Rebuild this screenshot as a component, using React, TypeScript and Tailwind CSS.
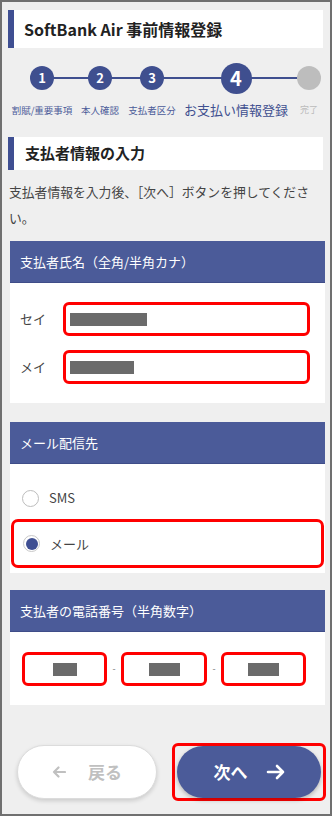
import React from 'react';

const font = { fontFamily: '"Noto Sans CJK JP", "Noto Sans", sans-serif' };

const steps = [
  { n: '1', label: '割賦/重要事項', w: 'w-[64px]' },
  { n: '2', label: '本人確認', w: 'w-[52px]' },
  { n: '3', label: '支払者区分', w: 'w-[52px]' },
  { n: '4', label: 'お支払い情報登録', w: 'w-[116px]', active: true },
  { n: '', label: '完了', w: 'w-[30px]', done: true },
];

const Redact: React.FC<{ w: string }> = ({ w }) => <div className={`h-[13px] bg-[#6b6b6b] ${w}`} />;

const CardHeader: React.FC<{ title: string }> = ({ title }) => (
  <div className="h-[42px] bg-[#4b5b99] border-b border-[#3f4d88] flex items-center pl-[10px] text-[13px] text-white">
    {title}
  </div>
);

export default function App() {
  return (
    <div
      className="w-[332px] h-[816px] border-2 border-[#707070] bg-[#efefef] overflow-hidden flex flex-col"
      style={font}
    >
      {/* Page title */}
      <div className="mt-[8px] ml-[6px] w-[315px] h-[38px] bg-white flex items-center">
        <div className="w-[6px] self-stretch bg-[#3f4f92]" />
        <div className="pl-[10px] text-[16px] font-bold text-[#222]">SoftBank Air 事前情報登録</div>
      </div>

      {/* Stepper */}
      <div className="relative mt-[14px] ml-[8px] flex">
        <div className="absolute left-[34px] top-[15px] w-[265px] h-[2px] bg-[#3f4f8f]" />
        {steps.map((s) => (
          <div key={s.label} className={`relative flex flex-col items-center ${s.w}`}>
            <div className="h-[32px] flex items-center">
              {s.active ? (
                <div className="w-[31px] h-[31px] rounded-full bg-[#3f4f8f] text-white text-[20px] font-bold flex items-center justify-center">
                  {s.n}
                </div>
              ) : s.done ? (
                <div className="w-[24px] h-[24px] rounded-full bg-[#bdbdbd]" />
              ) : (
                <div className="w-[24px] h-[24px] rounded-full bg-[#3f4f8f] text-white text-[13px] font-bold flex items-center justify-center">
                  {s.n}
                </div>
              )}
            </div>
            <div
              className={`mt-[8px] h-[16px] flex items-center whitespace-nowrap ${
                s.active ? 'text-[13px] text-[#3f4f8f]' : s.done ? 'text-[9px] text-[#bbbbbb]' : 'text-[9.5px] text-[#4b5b99]'
              }`}
            >
              {s.label}
            </div>
          </div>
        ))}
      </div>

      {/* Section title */}
      <div className="mt-[19px] ml-[6px] w-[315px] h-[33px] bg-white flex items-center">
        <div className="w-[6px] self-stretch bg-[#3f4f92]" />
        <div className="pl-[11px] text-[15px] font-bold text-[#222]">支払者情報の入力</div>
      </div>

      <p className="mt-[9px] ml-[7px] w-[316px] text-[12.8px] leading-[26px] text-[#444]">
        支払者情報を入力後、［次へ］ボタンを押してください。
      </p>

      {/* Name card */}
      <div className="mt-[10px] ml-[8px] w-[315px] bg-white">
        <CardHeader title="支払者氏名（全角/半角カナ）" />
        <div className="pt-[19px] pb-[19px] flex flex-col gap-[14px]">
          {[
            { l: 'セイ', w: 'w-[77px]' },
            { l: 'メイ', w: 'w-[64px]' },
          ].map((r) => (
            <div key={r.l} className="flex items-center">
              <div className="w-[53px] pl-[10px] text-[13px] text-[#444]">{r.l}</div>
              <div className="w-[247px] h-[34px] border-[3px] border-[#ff0000] rounded-[6px] flex items-center pl-[4px]">
                <Redact w={r.w} />
              </div>
            </div>
          ))}
        </div>
      </div>

      {/* Mail card */}
      <div className="mt-[19px] ml-[8px] w-[315px] bg-white">
        <CardHeader title="メール配信先" />
        <div className="pt-[22px] pb-[5px] flex flex-col">
          <div className="h-[24px] flex items-center pl-[12px] mb-[9px]">
            <div className="w-[17px] h-[17px] rounded-full border-[1.5px] border-[#bdbdbd] bg-white" />
            <span className="ml-[10px] text-[13px] text-[#444]">SMS</span>
          </div>
          <div className="ml-[1px] w-[313px] h-[49px] border-[3px] border-[#ff0000] rounded-[7px] flex items-center pl-[9px]">
            <div className="w-[17px] h-[17px] rounded-full border-[1.5px] border-[#c8c8c8] bg-white flex items-center justify-center">
              <div className="w-[12px] h-[12px] rounded-full bg-[#3f4f92]" />
            </div>
            <span className="ml-[10px] text-[13px] text-[#444]">メール</span>
          </div>
        </div>
      </div>

      {/* Phone card */}
      <div className="mt-[17px] ml-[8px] w-[315px] bg-white">
        <CardHeader title="支払者の電話番号（半角数字）" />
        <div className="pt-[20px] pb-[19px] pl-[12px] flex items-center">
          <div className="w-[85px] h-[34px] border-[3px] border-[#ff0000] rounded-[6px] flex items-center justify-center">
            <Redact w="w-[24px]" />
          </div>
          <div className="w-[14px] text-center text-[9px] text-[#777]">-</div>
          <div className="w-[86px] h-[34px] border-[3px] border-[#ff0000] rounded-[6px] flex items-center justify-center">
            <Redact w="w-[31px]" />
          </div>
          <div className="w-[14px] text-center text-[9px] text-[#777]">-</div>
          <div className="w-[85px] h-[34px] border-[3px] border-[#ff0000] rounded-[6px] flex items-center justify-center">
            <Redact w="w-[31px]" />
          </div>
        </div>
      </div>

      {/* Buttons */}
      <div className="mt-[38px] flex items-center">
        <button className="ml-[15px] w-[140px] h-[54px] rounded-full bg-white border border-[#dcdcdc] shadow-[0_2px_4px_rgba(0,0,0,0.15)] flex items-center justify-center gap-[22px] text-[#c0c0c0] text-[17px] font-bold">
          <svg width="14" height="14" viewBox="0 0 14 14" fill="none" stroke="#c0c0c0" strokeWidth="2.2" strokeLinecap="round" strokeLinejoin="round">
            <path d="M13 7H2M6.5 2.5 2 7l4.5 4.5" />
          </svg>
          <span>戻る</span>
        </button>
        <div className="ml-[15px] w-[154px] h-[58px] border-[3px] border-[#ff0000] rounded-[6px] flex items-center justify-center">
          <button className="w-[144px] h-[52px] rounded-full bg-[#4b5b99] shadow-[0_2px_4px_rgba(0,0,0,0.25)] flex items-center justify-center gap-[18px] text-white text-[17px] font-bold">
            <span>次へ</span>
            <svg width="19" height="16" viewBox="0 0 19 16" fill="none" stroke="#ffffff" strokeWidth="2.6" strokeLinecap="round" strokeLinejoin="round">
              <path d="M2 8h15M11 2l6 6-6 6" />
            </svg>
          </button>
        </div>
      </div>
    </div>
  );
}
